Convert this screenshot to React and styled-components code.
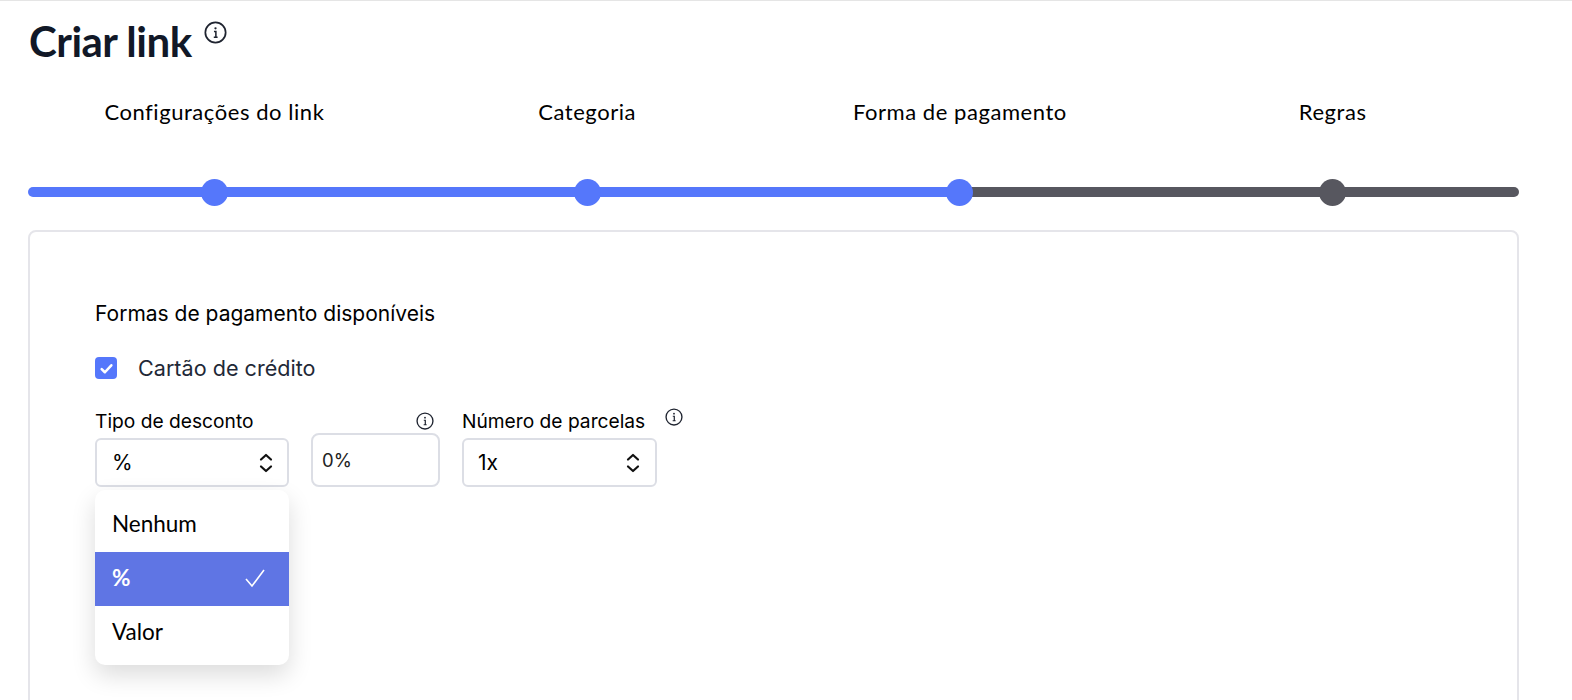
import React from 'react';
import styled, { createGlobalStyle } from 'styled-components';

const Global = createGlobalStyle`
  html, body { margin: 0; padding: 0; background: #fff; height: 700px; overflow: hidden; }
  * { box-sizing: border-box; }
`;

const Page = styled.div`
  border-top: 1px solid #e5e5e5;
  padding: 0 53px 0 28px;
  font-family: Lato, "Open Sans", sans-serif;
  color: #000;
`;

const TitleRow = styled.div`
  display: flex;
  align-items: flex-start;
  height: 71px;
  padding: 20px 0 0 1px;
  gap: 12px;
`;

const Title = styled.h1`
  margin: 0;
  font-size: 42px;
  line-height: 40px;
  font-weight: 700;
  color: #111827;
  letter-spacing: -0.5px;
`;

const Steps = styled.div`
  display: grid;
  grid-template-columns: repeat(4, 1fr);
  height: 159px;
`;

const Step = styled.div`
  display: flex;
  flex-direction: column;
  align-items: center;
`;

const StepLabel = styled.div`
  font-size: 22px;
  letter-spacing: 0.55px;
  line-height: 24px;
  height: 115px;
  padding-top: 28px;
  white-space: nowrap;
`;

const Track = styled.div`
  position: relative;
  width: 100%;
  height: 10px;
  display: flex;
  justify-content: center;
  align-items: center;
  background: ${(p) => (p.$done ? '#5577fb' : '#57575f')};
  border-radius: ${(p) => p.$radius};
`;

const HalfTrack = styled.div`
  position: absolute;
  left: 50%;
  right: 0;
  top: 0;
  bottom: 0;
  background: #57575f;
`;

const Dot = styled.div`
  position: relative;
  width: 27px;
  height: 27px;
  border-radius: 50%;
  background: ${(p) => (p.$done ? '#5577fb' : '#57575f')};
`;

const Card = styled.div`
  height: 520px;
  margin-top: -1px;
  border: 2px solid #e5e5ea;
  border-radius: 8px;
  padding: 68px 65px 0;
`;

const SectionTitle = styled.div`
  font-family: Inter, sans-serif;
  font-size: 21px;
  line-height: 28px;
  font-weight: 400;
`;

const CheckRow = styled.label`
  display: flex;
  align-items: center;
  gap: 21px;
  margin-top: 29px;
  height: 22px;
  font-family: Inter, sans-serif;
  font-size: 21.6px;
  color: #1f2937;
`;

const CheckBox = styled.span`
  width: 22px;
  height: 22px;
  border-radius: 4px;
  background: #5577fb;
  display: flex;
  align-items: center;
  justify-content: center;
`;

const Fields = styled.div`
  display: flex;
  margin-top: 29px;
  gap: 22px;
`;

const Field = styled.div`
  position: relative;
  width: ${(p) => p.$width}px;
  flex: none;
`;

const FieldHead = styled.div`
  display: flex;
  align-items: center;
  justify-content: ${(p) => (p.$end ? 'flex-end' : 'flex-start')};
  height: 25px;
  margin-bottom: 5px;
  padding-right: ${(p) => (p.$end ? 6 : 0)}px;
  font-family: Inter, sans-serif;
  font-size: 19.2px;
  font-weight: 400;
  white-space: nowrap;
`;

const SideInfo = styled.span`
  position: absolute;
  left: ${(p) => p.$left}px;
  top: 0;
`;

const Select = styled.div`
  height: 49px;
  border: 2px solid #dcdee5;
  border-radius: 6px;
  display: flex;
  align-items: center;
  justify-content: space-between;
  padding: 0 ${(p) => p.$right}px 0 ${(p) => p.$pad}px;
  font-family: Inter, sans-serif;
  font-size: 21px;
`;

const Input = styled.div`
  height: 54px;
  margin-top: -5px;
  border: 2px solid #dcdee5;
  border-radius: 8px;
  padding: 0 9px;
  display: flex;
  align-items: center;
  font-family: Inter, sans-serif;
  font-size: 18.5px;
  color: #222;
`;

const Menu = styled.div`
  position: absolute;
  left: 0;
  top: 82px;
  width: 194px;
  height: 175px;
  padding: 8px 0 0;
  background: #fff;
  border-radius: 10px;
  box-shadow: 0 10px 25px rgba(0, 0, 0, 0.14);
`;

const Option = styled.div`
  display: flex;
  align-items: center;
  justify-content: space-between;
  height: 54px;
  padding: 0 23px 3px 17px;
  font-size: 22.5px;
  background: ${(p) => (p.$active ? '#5f75e4' : 'transparent')};
  color: ${(p) => (p.$active ? '#fff' : '#000')};
  font-weight: ${(p) => (p.$active ? 700 : 400)};
`;

const InfoIcon = ({ size = 18 }) => (
  <svg width={size} height={size} viewBox="0 0 24 24" fill="none" stroke="#1f2430" strokeWidth="1.8">
    <circle cx="12" cy="12" r="10.6" />
    <path d="M10.4 11h2v6M10.2 17h4" strokeWidth="1.6" />
    <circle cx="12" cy="7.6" r="1.2" fill="#1f2430" stroke="none" />
  </svg>
);

const UpDown = () => (
  <svg width="14" height="22" viewBox="0 0 14 22" fill="none" stroke="#111" strokeWidth="2.2" strokeLinecap="round" strokeLinejoin="round">
    <path d="M2 7.5 7 3l5 4.5M2 14.5 7 19l5-4.5" />
  </svg>
);

const steps = [
  { label: 'Configurações do link', done: true, radius: '5px 0 0 5px' },
  { label: 'Categoria', done: true, radius: '0' },
  { label: 'Forma de pagamento', done: true, half: true, radius: '0' },
  { label: 'Regras', done: false, radius: '0 5px 5px 0' },
];

export default function App() {
  return (
    <>
      <Global />
      <Page>
        <TitleRow>
          <Title>Criar link</Title>
          <InfoIcon size={23} />
        </TitleRow>
        <Steps>
          {steps.map((s) => (
            <Step key={s.label}>
              <StepLabel>{s.label}</StepLabel>
              <Track $done={s.done} $radius={s.radius}>
                {s.half && <HalfTrack />}
                <Dot $done={s.done} />
              </Track>
            </Step>
          ))}
        </Steps>
        <Card>
          <SectionTitle>Formas de pagamento disponíveis</SectionTitle>
          <CheckRow>
            <CheckBox>
              <svg width="15" height="15" viewBox="0 0 14 14" fill="none" stroke="#fff" strokeWidth="2.4" strokeLinecap="round" strokeLinejoin="round">
                <path d="M2.5 7.5 5.5 10.5 11.5 4" />
              </svg>
            </CheckBox>
            Cartão de crédito
          </CheckRow>
          <Fields>
            <Field $width={194}>
              <FieldHead>Tipo de desconto</FieldHead>
              <Select $pad={15} $right={14}>
                %
                <UpDown />
              </Select>
              <Menu>
                <Option>Nenhum</Option>
                <Option $active>
                  %
                  <svg width="22" height="20" viewBox="0 0 22 20" fill="none" stroke="#fff" strokeWidth="1.6">
                    <path d="M2 11 8 18 20 2" />
                  </svg>
                </Option>
                <Option>Valor</Option>
              </Menu>
            </Field>
            <Field $width={129}>
              <FieldHead $end>
                <InfoIcon />
              </FieldHead>
              <Input>0%</Input>
            </Field>
            <Field $width={195}>
              <FieldHead>Número de parcelas</FieldHead>
              <SideInfo $left={203}>
                <InfoIcon />
              </SideInfo>
              <Select $pad={14} $right={15}>
                1x
                <UpDown />
              </Select>
            </Field>
          </Fields>
        </Card>
      </Page>
    </>
  );
}
